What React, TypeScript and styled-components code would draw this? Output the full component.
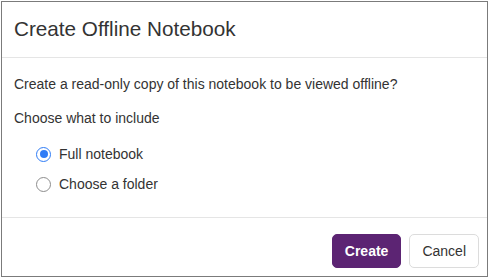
import React, { useState } from "react";
import styled, { createGlobalStyle } from "styled-components";

const Global = createGlobalStyle`
  html, body { margin: 0; padding: 0; background: #ffffff; }
  body { font-family: "Liberation Sans", Arial, Helvetica, sans-serif; }
  * { box-sizing: border-box; }
`;

const Page = styled.div`
  padding: 1px 0 0 1px;
`;

const Modal = styled.div`
  width: 487px;
  height: 276px;
  border: 1px solid #7b7b7b;
  background: #fff;
  display: flex;
  flex-direction: column;
`;

const Header = styled.div`
  height: 56px;
  padding: 0 12px;
  display: flex;
  align-items: center;
  border-bottom: 1px solid #e5e5e5;
`;

const Title = styled.h4`
  margin: 0;
  font-size: 20.7px;
  font-weight: 400;
  color: #333;
  padding-bottom: 2px;
`;

const Body = styled.div`
  flex: 1;
  padding: 18px 12px 0;
  border-bottom: 1px solid #e5e5e5;
  color: #333;
  font-size: 14px;
`;

const Para = styled.p`
  margin: 0 0 18px;
  line-height: 16px;
`;

const Options = styled.div`
  display: flex;
  flex-direction: column;
  gap: 14px;
  padding-left: 22px;
  margin-top: 20px;
`;

const Option = styled.label`
  display: flex;
  align-items: center;
  gap: 8px;
  line-height: 16px;
  cursor: pointer;
`;

const Radio = styled.span<{ $checked: boolean }>`
  width: 15px;
  height: 15px;
  border-radius: 50%;
  border: ${(p) => (p.$checked ? "1.5px solid #2f7cf6" : "1px solid #8d8d8d")};
  background: #fff;
  display: flex;
  align-items: center;
  justify-content: center;
  flex: none;
  &::after {
    content: "";
    width: 8px;
    height: 8px;
    border-radius: 50%;
    background: ${(p) => (p.$checked ? "#2f7cf6" : "transparent")};
  }
`;

const Footer = styled.div`
  flex: none;
  height: 58px;
  display: flex;
  align-items: flex-start;
  justify-content: flex-end;
  gap: 8px;
  padding: 16px 8px 0 0;
`;

const Button = styled.button<{ $primary?: boolean }>`
  height: 34px;
  padding: 0 12px;
  border-radius: 5px;
  font-family: "Liberation Sans", Arial, Helvetica, sans-serif;
  font-size: 14px;
  font-weight: ${(p) => (p.$primary ? 700 : 400)};
  color: ${(p) => (p.$primary ? "#fff" : "#333")};
  background: ${(p) => (p.$primary ? "#5c2473" : "#fff")};
  border: 1px solid ${(p) => (p.$primary ? "#5c2473" : "#dcdcdc")};
  cursor: pointer;
`;

export default function App() {
  const [choice, setChoice] = useState<"full" | "folder">("full");
  return (
    <Page>
      <Global />
      <Modal>
        <Header>
          <Title>Create Offline Notebook</Title>
        </Header>
        <Body>
          <Para>Create a read-only copy of this notebook to be viewed offline?</Para>
          <Para>Choose what to include</Para>
          <Options>
            <Option onClick={() => setChoice("full")}>
              <Radio $checked={choice === "full"} />
              Full notebook
            </Option>
            <Option onClick={() => setChoice("folder")}>
              <Radio $checked={choice === "folder"} />
              Choose a folder
            </Option>
          </Options>
        </Body>
        <Footer>
          <Button $primary>Create</Button>
          <Button>Cancel</Button>
        </Footer>
      </Modal>
    </Page>
  );
}
